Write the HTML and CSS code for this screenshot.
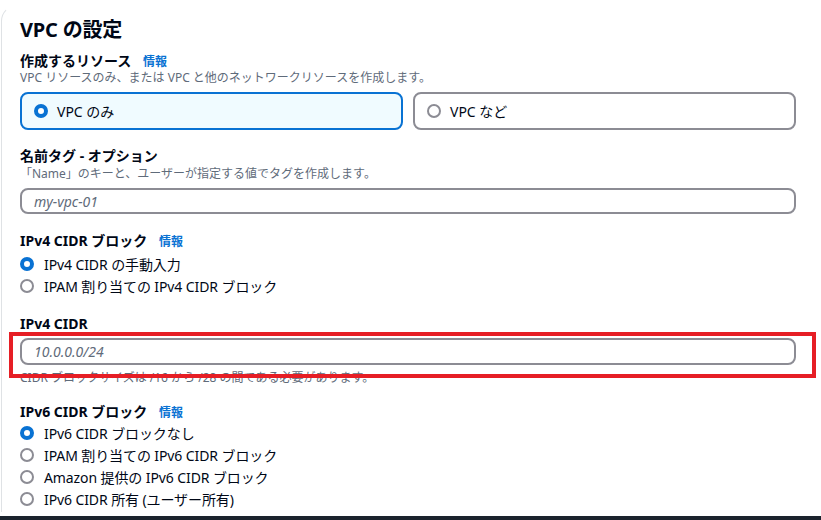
FILE: index.html
```html
<!DOCTYPE html>
<html lang="ja">
<head>
<meta charset="utf-8">
<title>VPC の設定</title>
<link rel="stylesheet" href="styles.css">
</head>
<body>
<div class="page">
  <div class="card">
    <h2 class="title">VPC の設定</h2>

    <div class="field f-res">
      <div class="label">作成するリソース <a class="info">情報</a></div>
      <div class="desc">VPC リソースのみ、または VPC と他のネットワークリソースを作成します。</div>
      <div class="tiles">
        <div class="tile selected"><span class="radio on"></span><span>VPC のみ</span></div>
        <div class="tile"><span class="radio"></span><span>VPC など</span></div>
      </div>
    </div>

    <div class="field f-name">
      <div class="label">名前タグ - オプション</div>
      <div class="desc">「Name」のキーと、ユーザーが指定する値でタグを作成します。</div>
      <div class="input"><span class="ph">my-vpc-01</span></div>
    </div>

    <div class="field f-v4block">
      <div class="label">IPv4 CIDR ブロック <a class="info">情報</a></div>
      <div class="radios">
        <div class="ropt"><span class="radio on"></span><span>IPv4 CIDR の手動入力</span></div>
        <div class="ropt"><span class="radio"></span><span>IPAM 割り当ての IPv4 CIDR ブロック</span></div>
      </div>
    </div>

    <div class="field f-v4 highlight-wrap">
      <div class="label">IPv4 CIDR</div>
      <div class="input tall"><span class="ph">10.0.0.0/24</span></div>
      <div class="desc after">CIDR ブロックサイズは /16 から /28 の間である必要があります。</div>
      <div class="highlight"></div>
    </div>

    <div class="field f-v6block">
      <div class="label">IPv6 CIDR ブロック <a class="info">情報</a></div>
      <div class="radios">
        <div class="ropt"><span class="radio on"></span><span>IPv6 CIDR ブロックなし</span></div>
        <div class="ropt"><span class="radio"></span><span>IPAM 割り当ての IPv6 CIDR ブロック</span></div>
        <div class="ropt"><span class="radio"></span><span>Amazon 提供の IPv6 CIDR ブロック</span></div>
        <div class="ropt"><span class="radio"></span><span>IPv6 CIDR 所有 (ユーザー所有)</span></div>
      </div>
    </div>
  </div>
  <div class="bottombar"></div>
</div>
</body>
</html>
```

FILE: styles.css
```css
html, body {
  margin: 0;
  padding: 0;
  height: 520px;
  overflow: hidden;
  background: #ffffff;
}
body {
  font-family: "Noto Sans", "Noto Sans CJK JP", sans-serif;
  color: #000716;
}
.page {
  width: 821px;
  height: 520px;
  display: flex;
  flex-direction: column;
}
.card {
  margin: 5px 0 0 1px;
  padding: 12px 0 0 18px;
  width: 776px;
  height: 494px;
  border-top: 1px solid transparent;
  border-left: 1px solid #dfe2e5;
  border-top-left-radius: 16px;
  box-sizing: content-box;
  flex: none;
}
.title {
  margin: 0;
  font-size: 20px;
  line-height: 24px;
  font-weight: 700;
  letter-spacing: -0.2px;
}
.field { display: flex; flex-direction: column; }
.label {
  font-size: 14px;
  font-weight: 700;
  line-height: 18px;
}
.info {
  color: #0972d3;
  font-size: 12px;
  font-weight: 700;
  margin-left: 8px;
}
.desc {
  font-size: 12px;
  line-height: 16px;
  color: #5f6b7a;
}
.f-res { margin-top: 10px; }
.f-res .desc { margin-top: -1px; }
.tiles {
  margin-top: 6px;
  display: flex;
  gap: 10px;
}
.tile {
  flex: 1;
  height: 38px;
  box-sizing: border-box;
  border: 2px solid #8c8c94;
  border-radius: 8px;
  display: flex;
  align-items: center;
  gap: 9px;
  padding-left: 12px;
  font-size: 14px;
}
.tile.selected {
  border-color: #0972d3;
  background: #f0fbff;
}
.radio {
  width: 14px;
  height: 14px;
  box-sizing: border-box;
  border-radius: 50%;
  border: 2px solid #8c8c94;
  background: #fff;
  flex: none;
}
.radio.on {
  border: 4px solid #0972d3;
}
.f-name { margin-top: 17px; }
.f-name .desc { margin-top: 1px; }
.input {
  margin-top: 6px;
  height: 26px;
  box-sizing: border-box;
  border: 2px solid #8c8c94;
  border-radius: 8px;
  display: flex;
  align-items: center;
  padding-left: 12px;
}
.input.tall { height: 27px; margin-top: 5px; }
.ph {
  font-style: italic;
  color: #5f6b7a;
  font-size: 14px;
}
.f-v4block { margin-top: 18px; }
.radios {
  margin-top: 2px;
  display: flex;
  flex-direction: column;
}
.ropt {
  height: 22px;
  display: flex;
  align-items: center;
  gap: 10px;
  font-size: 14px;
  letter-spacing: -0.1px;
}
.f-v4 { margin-top: 18px; }
.highlight-wrap { position: relative; }
.desc.after { margin-top: 5px; }
.highlight {
  position: absolute;
  left: -11px;
  right: -20px;
  top: 17px;
  height: 46px;
  box-sizing: border-box;
  border: 4px solid #e61e25;
  pointer-events: none;
}
.f-v6block { margin-top: 17px; }
.f-v6block .radios { margin-top: 0; }
.bottombar {
  height: 4px;
  background: #1b232d;
  flex: none;
  margin-top: 4px;
}
```
